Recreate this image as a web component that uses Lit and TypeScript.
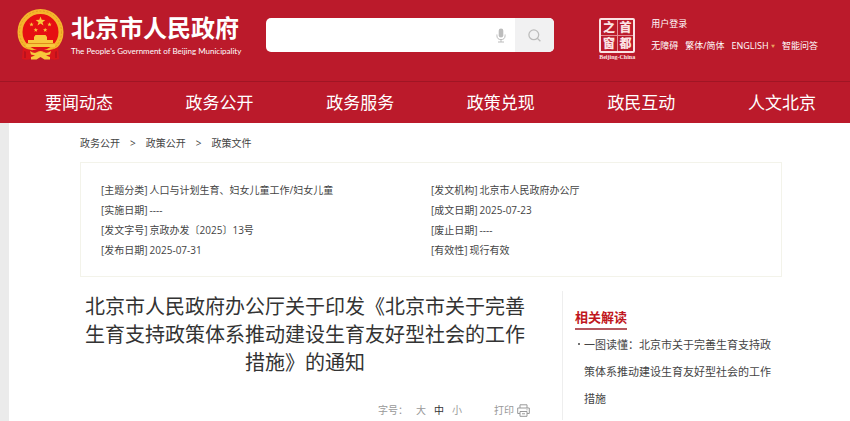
import { LitElement, html, svg, css } from "lit";
import { customElement, state } from "lit/decorators.js";

const star = (cx: number, cy: number, r: number) => {
  const pts: string[] = [];
  for (let i = 0; i < 10; i++) {
    const a = (Math.PI / 5) * i - Math.PI / 2;
    const d = i % 2 ? r * 0.42 : r;
    pts.push(`${(cx + d * Math.cos(a)).toFixed(2)},${(cy + d * Math.sin(a)).toFixed(2)}`);
  }
  return svg`<polygon points=${pts.join(" ")} fill="#f8c83c"></polygon>`;
};

@customElement("state-emblem")
class StateEmblem extends LitElement {
  static styles = css`
    :host { display: block; flex: none; width: 47px; height: 52px; }
    svg { display: block; width: 100%; height: 100%; }
  `;
  render() {
    return html`<svg viewBox="0 0 47 52" aria-hidden="true">
      <path d="M6 37 L5 50 Q11 52 15 49 L23 45 L31 49 Q37 52 42 50 L41 37Z" fill="#d9161c" />
      <path d="M8 40 L8 49 M39 40 L39 49" stroke="#a90f1d" stroke-width="1.2" />
      <circle cx="23.5" cy="23" r="20.5" fill="#e60f12" stroke="#f5b52c" stroke-width="5" />
      <circle cx="23.5" cy="23" r="21" fill="none" stroke="#e39c22" stroke-width="1" stroke-dasharray="2 1.6" />
      ${star(23.5, 12.5, 5)} ${star(14.5, 15.5, 2.3)} ${star(32.5, 15.5, 2.3)}
      ${star(18.8, 21, 2.3)} ${star(28.2, 21, 2.3)}
      <path d="M17 28 L18.5 26 H28.5 L30 28 V31 H36 V34 L38 35.5 V38 H9 V35.5 L11 34 V31 H17Z" fill="#f8c83c" />
      <path d="M11 34.5 H36" stroke="#e08a1c" stroke-width="1" />
      <path d="M6 38 Q15 44 23.5 38.5 Q32 44 41 38 L40 42 Q32 46 27 43 Q23.5 41 20 43 Q15 46 7 42Z" fill="#d9161c" />
      <path d="M13 42 Q18 45.5 23.5 42.5 Q29 45.5 34 42 L33 45.5 L29 46.5 L33 48 V50.5 H27.5 L23.5 48 L19.5 50.5 H14 V48 L18 46.5 L14 45.5Z" fill="#f8c83c" />
    </svg>`;
  }
}

@customElement("site-header")
class SiteHeader extends LitElement {
  static styles = css`
    :host { display: block; background: #bb1a2b; color: #fff; }
    a { color: inherit; text-decoration: none; }
    .top {
      display: flex; align-items: flex-start; height: 82px; box-sizing: border-box;
      padding: 9px 32px 0 17px; border-bottom: 1px solid #a01524;
    }
    .brand { display: flex; gap: 7px; width: 249px; flex: none; }
    .names { padding-top: 3px; white-space: nowrap; }
    .name { margin: 0; font-size: 24px; line-height: 32px; font-weight: 700; }
    .english { font: 8px/14px Lato, sans-serif; }
    .search {
      display: flex; flex: 0 1 288px; min-width: 0; height: 34px; margin-top: 9px;
      border-radius: 5px; overflow: hidden; background: #fff;
    }
    .search input { flex: 1; min-width: 0; border: 0; outline: 0; background: none; padding: 0 10px; font: inherit; }
    .search button { flex: none; border: 0; padding: 0; display: grid; place-items: center; background: none; color: #bcbcbc; }
    .search .voice { width: 29px; }
    .search .go { width: 39px; background: #f1f1f2; }
    .aside { display: flex; gap: 15px; margin-left: auto; padding-top: 9px; }
    .seal { width: 38px; }
    .grid {
      display: grid; grid-template-columns: 1fr 1fr; gap: 1px;
      width: 36px; box-sizing: border-box; margin: 0 auto;
      border: 2px solid #fbe3e4; border-radius: 2px; background: #e58d95;
    }
    .grid span {
      background: #bb1a2b; font-size: 12px; line-height: 15px; text-align: center;
      font-weight: 900; color: #fbe3e4;
    }
    .caption { display: block; text-align: center; white-space: nowrap; font: 700 6px/8px "Liberation Serif", serif; color: #fbe3e4; }
    .links { font-size: 9px; line-height: 12px; white-space: nowrap; }
    .row { display: flex; gap: 7px; margin-top: 10px; }
    .more { color: #e9a05b; font-size: 4px; vertical-align: 1px; }
    nav { display: flex; justify-content: space-between; padding: 0 34px 0 45px; font-size: 17px; line-height: 41px; }
  `;
  render() {
    const nav = ["要闻动态", "政务公开", "政务服务", "政策兑现", "政民互动", "人文北京"];
    return html`
      <div class="top">
        <a class="brand" href="#">
          <state-emblem></state-emblem>
          <div class="names">
            <div class="name">北京市人民政府</div>
            <div class="english">The People's Government of Beijing Municipality</div>
          </div>
        </a>
        <form class="search" role="search" @submit=${(e: Event) => e.preventDefault()}>
          <input type="text" aria-label="搜索" />
          <button class="voice" type="button" aria-label="语音">
            <svg width="10" height="15" viewBox="0 0 10 15" fill="none" stroke="currentColor">
              <rect x="2.7" y="0.5" width="4.6" height="9" rx="2.3" fill="currentColor" stroke="none" />
              <path d="M0.9 6.5 V7.5 A4.1 4.1 0 0 0 9.1 7.5 V6.5 M5 11.5 V14 M2 14 H8" />
            </svg>
          </button>
          <button class="go" aria-label="搜索">
            <svg width="13" height="13" viewBox="0 0 13 13" fill="none" stroke="currentColor" stroke-width="1.3">
              <circle cx="5.8" cy="5.8" r="4.9" /><path d="M9.3 9.3 L12.4 12.2" />
            </svg>
          </button>
        </form>
        <div class="aside">
          <a class="seal" href="#">
            <div class="grid"><span>之</span><span>首</span><span>窗</span><span>都</span></div>
            <span class="caption">Beijing-China</span>
          </a>
          <div class="links">
            <a href="#">用户登录</a>
            <div class="row">
              <a href="#">无障碍</a><a href="#">繁体/简体</a>
              <a href="#">ENGLISH <span class="more">▼</span></a><a href="#">智能问答</a>
            </div>
          </div>
        </div>
      </div>
      <nav>${nav.map((n) => html`<a href="#">${n}</a>`)}</nav>
    `;
  }
}

@customElement("app-root")
class AppRoot extends LitElement {
  @state() private size = "中";

  static styles = css`
    :host {
      display: flex; flex-direction: column; min-height: 100vh; background: #ebebeb; color: #444;
      font-family: "Open Sans", "Noto Sans CJK SC", sans-serif; font-size: 10px; line-height: 20px;
    }
    a { color: inherit; text-decoration: none; }
    main { flex: 1; margin-left: 9px; padding: 0 68px 0 71px; background: #fff; }
    .crumbs { display: flex; gap: 10px; padding: 10px 0 9px; }
    .meta {
      display: grid; grid-template-columns: 330px 1fr; margin: 0; padding: 17px 20px 16px;
      border: 1px solid #f3f3ea;
    }
    .meta div { display: flex; gap: 2px; }
    .meta dt, .meta dd { margin: 0; }
    .body { display: flex; gap: 32px; padding-top: 14px; }
    article { flex: 1; min-width: 0; padding-top: 2px; }
    h1 { margin: 0; font-size: 20px; line-height: 28px; font-weight: 400; color: #333; text-align: center; }
    .tools { display: flex; justify-content: flex-end; align-items: center; margin-top: 23px; color: #999; }
    button { border: 0; padding: 0; background: none; color: inherit; font: inherit; }
    .sizes { display: flex; gap: 8px; margin-right: 32px; }
    .active { color: #333; }
    .print { display: flex; align-items: center; gap: 3px; }
    aside { flex: 0 0 220px; box-sizing: border-box; border-left: 1px solid #eee; padding: 15px 4px 0 12px; }
    h2 {
      display: block; width: fit-content; margin: 0 0 1px; font-size: 13px; line-height: 22px; font-weight: 700;
      color: #c01620; border-bottom: 2px solid #b5575e;
    }
    ul { margin: 0; padding: 0; list-style: none; font-size: 11px; line-height: 27px; }
    li { display: flex; gap: 4px; }
    li::before { content: ""; flex: none; width: 2px; height: 2px; margin: 12px 0 0 3px; border-radius: 1px; background: #444; }
  `;

  render() {
    const meta = [
      ["主题分类", "人口与计划生育、妇女儿童工作/妇女儿童"],
      ["发文机构", "北京市人民政府办公厅"],
      ["实施日期", "----"],
      ["成文日期", "2025-07-23"],
      ["发文字号", "京政办发〔2025〕13号"],
      ["废止日期", "----"],
      ["发布日期", "2025-07-31"],
      ["有效性", "现行有效"],
    ];
    return html`
      <site-header></site-header>
      <main lang="zh-CN">
        <div class="crumbs">
          <a href="#">政务公开</a><span>&gt;</span><a href="#">政策公开</a><span>&gt;</span><a href="#">政策文件</a>
        </div>
        <dl class="meta">
          ${meta.map(([k, v]) => html`<div><dt>[${k}]</dt><dd>${v}</dd></div>`)}
        </dl>
        <div class="body">
          <article>
            <h1>北京市人民政府办公厅关于印发《北京市关于完善生育支持政策体系推动建设生育友好型社会的工作措施》的通知</h1>
            <div class="tools">
              <div class="sizes">
                <span>字号：</span>
                ${["大", "中", "小"].map(
                  (s) => html`<button class=${s === this.size ? "active" : ""} @click=${() => (this.size = s)}>${s}</button>`
                )}
              </div>
              <button class="print">打印
                <svg width="13" height="13" viewBox="0 0 13 13" fill="none" stroke="currentColor">
                  <path d="M3 4 V0.8 H10 V4 M3 9.5 H0.7 V4 H12.3 V9.5 H10" />
                  <path d="M3 7.5 H10 V12.3 H3Z M5 9.8 H8 M9.5 5.8 H10.5" />
                </svg>
              </button>
            </div>
          </article>
          <aside>
            <h2>相关解读</h2>
            <ul>
              <li><a href="#">一图读懂：北京市关于完善生育支持政策体系推动建设生育友好型社会的工作措施</a></li>
            </ul>
          </aside>
        </div>
      </main>
    `;
  }
}
